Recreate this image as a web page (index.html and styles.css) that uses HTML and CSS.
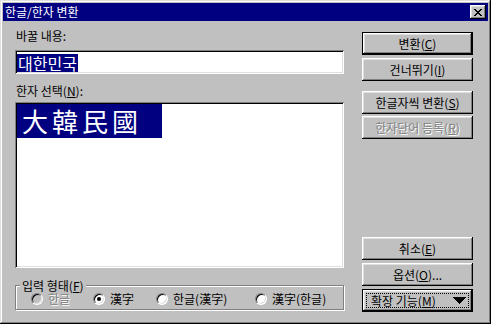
FILE: index.html
```html
<!DOCTYPE html>
<html>

<head>
    <title>한글/한자 변환</title>
    <link rel="stylesheet" href="styles.css">
</head>

<body>
    <div class="window">
        <div class="title-bar">
            <span class="title">한글/한자 변환</span>
            <button class="close-btn">
                <svg width="8" height="7" viewBox="0 0 8 7" shape-rendering="crispEdges">
                    <path fill="#000" d="M0 0h2v1h-2zM6 0h2v1h-2zM1 1h2v1h-2zM5 1h2v1h-2zM2 2h4v1h-4zM3 3h2v1h-2zM2 4h4v1h-4zM1 5h2v1h-2zM5 5h2v1h-2zM0 6h2v1h-2zM6 6h2v1h-2z" />
                </svg>
            </button>
        </div>

        <div class="dialog">
            <div class="left">
                <div class="label">바꿀 내용:</div>
                <div class="field"><span class="selected-text">대한민국</span></div>

                <div class="label label-list">한자 선택(<u>N</u>):</div>
                <div class="listbox">
                    <div class="list-item selected">大韓民國</div>
                </div>

                <fieldset class="group">
                    <legend>입력 형태(<u>F</u>)</legend>
                    <div class="radio-row">
                        <label class="radio disabled"><span class="radio-dot"></span>한글</label>
                        <label class="radio"><span class="radio-dot checked"></span>漢字</label>
                        <label class="radio"><span class="radio-dot"></span>한글(漢字)</label>
                        <label class="radio"><span class="radio-dot"></span>漢字(한글)</label>
                    </div>
                </fieldset>
            </div>

            <div class="right">
                <button class="btn default">변환(<u>C</u>)</button>
                <button class="btn">건너뛰기(<u>I</u>)</button>
                <button class="btn btn-gap">한글자씩 변환(<u>S</u>)</button>
                <button class="btn" disabled>한자단어 등록(<u>R</u>)</button>

                <button class="btn btn-bottom">취소(<u>E</u>)</button>
                <button class="btn">옵션(<u>O</u>)...</button>
                <button class="btn default focused">
                    <span>확장 기능(<u>M</u>)</span>
                    <svg width="13" height="7" viewBox="0 0 13 7" shape-rendering="crispEdges">
                        <path fill="#000" d="M0 0h13l-6.5 7z" />
                    </svg>
                </button>
            </div>
        </div>
    </div>
</body>

</html>
```

FILE: styles.css
```css
body {
    margin: 0;
    font-family: "Noto Sans CJK KR", "Liberation Sans", sans-serif;
    font-size: 12px;
    background-color: #c0c0c0;
}

.window {
    width: 491px;
    height: 324px;
    box-sizing: border-box;
    padding: 3px;
    background-color: #c0c0c0;
    box-shadow: inset -1px -1px #000, inset 1px 1px #dfdfdf,
        inset -2px -2px #808080, inset 2px 2px #fff;
    display: flex;
    flex-direction: column;
}

.title-bar {
    height: 18px;
    flex-shrink: 0;
    background-color: #000080;
    color: #fff;
    display: flex;
    align-items: center;
    justify-content: space-between;
    padding: 0 2px;
}

.title {
    line-height: 14px;
}

.close-btn {
    width: 16px;
    height: 14px;
    padding: 0;
    border: none;
    background-color: #c0c0c0;
    box-shadow: inset -1px -1px #000, inset 1px 1px #fff,
        inset -2px -2px #808080, inset 2px 2px #dfdfdf;
    display: flex;
    align-items: center;
    justify-content: center;
}

.dialog {
    flex: 1;
    display: flex;
    padding: 0 15px 9px 12px;
}

.left {
    width: 329px;
    display: flex;
    flex-direction: column;
}

.label {
    line-height: 14px;
    margin-top: 8px;
    padding-left: 1px;
}

.label-list {
    margin-top: 10px;
}

.field,
.listbox {
    box-sizing: border-box;
    background-color: #fff;
    box-shadow: inset 1px 1px #808080, inset -1px -1px #fff,
        inset 2px 2px #000, inset -2px -2px #dfdfdf;
    padding: 2px;
}

.field {
    height: 24px;
    margin-top: 7px;
    display: flex;
    align-items: flex-end;
    padding-left: 2px;
}

.selected-text {
    font-size: 16px;
    line-height: 18px;
    padding: 0 1px;
    background-color: #000080;
    color: #fff;
}

.listbox {
    height: 166px;
    margin-top: 4px;
}

.list-item {
    width: 145px;
    height: 34px;
    box-sizing: border-box;
    font-size: 26px;
    line-height: 34px;
    letter-spacing: 4px;
    padding-left: 5px;
    white-space: nowrap;
}

.selected {
    background-color: #000080;
    color: #fff;
}

.group {
    margin: 11px 0 0;
    padding: 0 0 3px 15px;
    min-width: 0;
    border: 1px solid #808080;
    box-shadow: inset 1px 1px #fff, 1px 1px #fff;
}

.group legend {
    padding: 0 2px;
    margin-left: -11px;
    line-height: 13px;
    background-color: #c0c0c0;
}

.radio-row {
    display: grid;
    grid-template-columns: 62px 63px 99px auto;
    align-items: center;
    height: 14px;
}

.radio {
    display: flex;
    align-items: center;
    gap: 5px;
    line-height: 12px;
}

.radio-dot {
    width: 12px;
    height: 12px;
    box-sizing: border-box;
    border-radius: 50%;
    background-color: #fff;
    border: 1px solid;
    border-color: #808080 #fff #fff #808080;
    box-shadow: inset 1px 1px #000, inset -1px -1px #dfdfdf;
    display: flex;
    align-items: center;
    justify-content: center;
}

.radio-dot.checked::after {
    content: "";
    width: 4px;
    height: 4px;
    border-radius: 50%;
    background-color: #000;
}

.radio.disabled {
    color: #808080;
    text-shadow: 1px 1px #fff;
}

.radio.disabled .radio-dot {
    background-color: #c0c0c0;
}

.right {
    width: 111px;
    margin-left: 18px;
    display: flex;
    flex-direction: column;
    gap: 3px;
    padding-top: 11px;
}

.btn {
    width: 111px;
    height: 23px;
    flex-shrink: 0;
    padding: 0;
    border: none;
    background-color: #c0c0c0;
    color: #000;
    font: inherit;
    line-height: 14px;
    box-shadow: inset -1px -1px #000, inset 1px 1px #fff,
        inset -2px -2px #808080, inset 2px 2px #dfdfdf;
}

.btn.default {
    box-shadow: inset 0 0 0 1px #000, inset -2px -2px #000, inset 2px 2px #fff,
        inset -3px -3px #808080, inset 3px 3px #dfdfdf;
}

.btn:disabled {
    color: #808080;
    text-shadow: 1px 1px #fff;
}

.btn-gap {
    margin-top: 7px;
}

.btn-gap + .btn {
    margin-top: -1px;
}

.btn-bottom {
    margin-top: auto;
}

.btn.focused {
    display: flex;
    align-items: center;
    justify-content: space-between;
    padding: 0 7px 0 9px;
    outline: 1px dotted #000;
    outline-offset: -5px;
}
```
